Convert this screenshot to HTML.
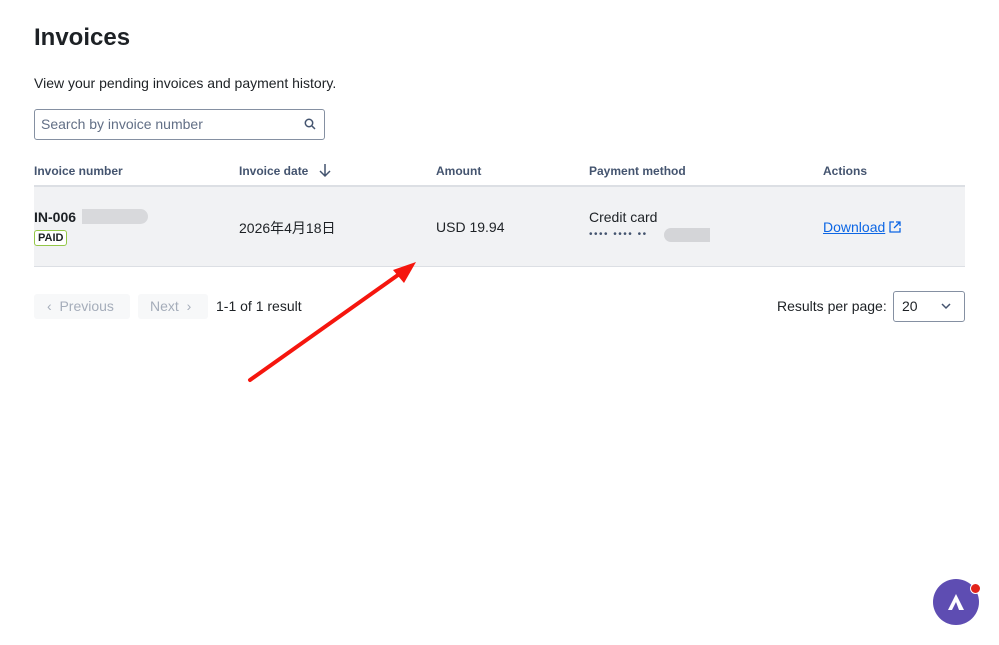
<!DOCTYPE html><html><head><meta charset="utf-8"><style>
body{margin:0;width:999px;height:645px;background:#fff;font-family:"Liberation Sans","Noto Sans CJK SC",sans-serif;color:#172b4d;position:relative;overflow:hidden}
.a{position:absolute;white-space:nowrap}
h1{position:absolute;left:34px;top:24px;margin:0;font-size:24px;font-weight:bold;color:#1d2125}
.th{position:absolute;top:164px;font-size:12px;font-weight:bold;color:#44546f}
.t{font-size:14px;color:#1d2125}
</style></head><body>
<h1>Invoices</h1>
<div class="a t" style="left:34px;top:75px">View your pending invoices and payment history.</div>
<div class="a" style="left:34px;top:109px;width:289px;height:29px;border:1px solid #8590a2;border-radius:3px"></div>
<div class="a" style="left:41px;top:116px;font-size:14px;color:#626f86">Search by invoice number</div>
<svg class="a" style="left:304px;top:118px" width="12" height="12" viewBox="0 0 12 12"><circle cx="5" cy="5" r="3.7" fill="none" stroke="#44546f" stroke-width="1.5"/><path d="M8 8l3 3" stroke="#44546f" stroke-width="1.5"/></svg>
<div class="th" style="left:34px">Invoice number</div>
<div class="th" style="left:239px">Invoice date</div>
<svg class="a" style="left:318px;top:163px" width="14" height="15" viewBox="0 0 14 15"><path d="M7 1v12M2 8l5 5 5-5" fill="none" stroke="#44546f" stroke-width="1.5"/></svg>
<div class="th" style="left:436px">Amount</div>
<div class="th" style="left:589px">Payment method</div>
<div class="th" style="left:823px">Actions</div>
<div class="a" style="left:34px;top:185px;width:931px;height:2px;background:#dcdfe4"></div>
<div class="a" style="left:34px;top:187px;width:931px;height:79px;background:#f1f2f4"></div>
<div class="a" style="left:34px;top:266px;width:931px;height:1px;background:#dcdfe4"></div>
<div class="a" style="left:34px;top:209px;font-size:14px;font-weight:bold;color:#1d2125">IN-006</div>
<div class="a" style="left:82px;top:209px;width:66px;height:15px;background:#d8d9dc;border-radius:0 8px 8px 0"></div>
<div class="a" style="left:34px;top:230px;border:1px solid #94c748;border-radius:3px;font-size:11px;font-weight:bold;padding:1px 3px;color:#1d2125;background:#fff">PAID</div>
<div class="a t" style="left:239px;top:218px">2026年4月18日</div>
<div class="a t" style="left:436px;top:219px">USD 19.94</div>
<div class="a t" style="left:589px;top:209px">Credit card</div>
<div class="a" style="left:589px;top:229px;font-size:10px;letter-spacing:1.5px;color:#44546f">•••• •••• ••</div>
<div class="a" style="left:664px;top:228px;width:46px;height:14px;background:#d4d5d8;border-radius:7px 0 0 7px"></div>
<div class="a" style="left:823px;top:219px;font-size:14px;color:#0c66e4;text-decoration:underline">Download</div>
<svg class="a" style="left:888px;top:220px" width="14" height="14" viewBox="0 0 14 14"><path d="M6 2H2v10h10V8M8 2h4v4M12 2L6 8" fill="none" stroke="#0c66e4" stroke-width="1.3"/></svg>
<div class="a" style="left:34px;top:294px;width:96px;height:25px;background:#f7f8f9;border-radius:3px"></div>
<div class="a" style="left:47px;top:298px;font-size:14px;color:#a5adba">‹&nbsp;&nbsp;Previous</div>
<div class="a" style="left:138px;top:294px;width:70px;height:25px;background:#f7f8f9;border-radius:3px"></div>
<div class="a" style="left:150px;top:298px;font-size:14px;color:#a5adba">Next&nbsp;&nbsp;›</div>
<div class="a t" style="left:216px;top:298px">1-1 of 1 result</div>
<div class="a t" style="left:777px;top:298px">Results per page:</div>
<div class="a" style="left:893px;top:291px;width:70px;height:29px;border:1px solid #8590a2;border-radius:3px"></div>
<div class="a t" style="left:902px;top:298px">20</div>
<svg class="a" style="left:940px;top:302px" width="12" height="8" viewBox="0 0 12 8"><path d="M2 2l4 4 4-4" fill="none" stroke="#44546f" stroke-width="1.5"/></svg>
<svg class="a" style="left:0;top:0" width="999" height="645"><path d="M250 380L405 270" stroke="#f5160e" stroke-width="4" stroke-linecap="round"/><path d="M416 262L393 270L404 283Z" fill="#f5160e"/></svg>
<div class="a" style="left:933px;top:579px;width:46px;height:46px;border-radius:50%;background:#5e4db2"></div>
<svg class="a" style="left:946px;top:592px" width="20" height="20" viewBox="0 0 20 20"><path d="M10 2L18 18H13L10 10L6 18H2Z" fill="#fff"/></svg>
<div class="a" style="left:970px;top:583px;width:9px;height:9px;border-radius:50%;background:#e2231a;border:1px solid #fff"></div>
</body></html>
